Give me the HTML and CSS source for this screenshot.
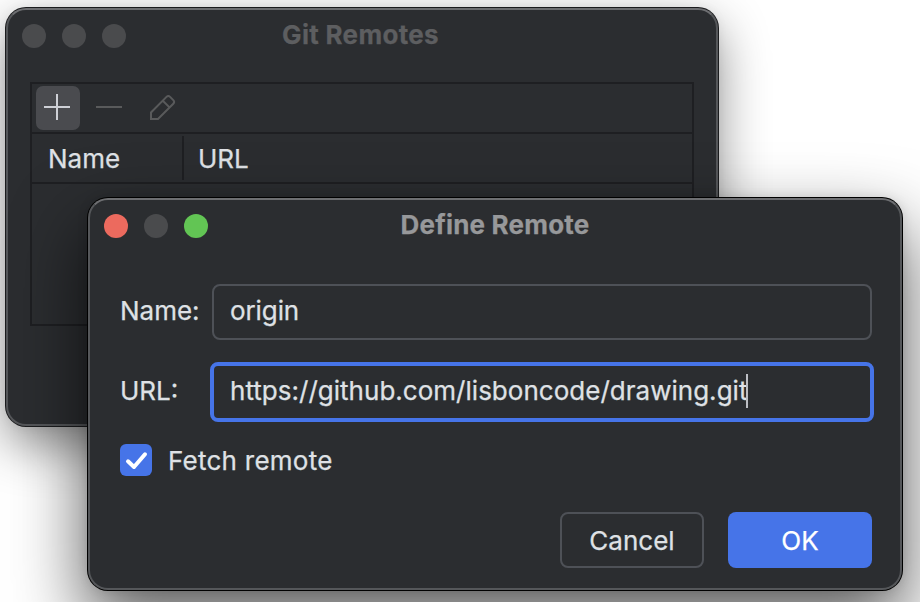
FILE: index.html
```html
<!DOCTYPE html>
<html lang="en">
<head>
<meta charset="utf-8">
<title>Git Remotes</title>
<link rel="stylesheet" href="styles.css">
</head>
<body>
<main class="desktop">
  <section class="window window-remotes">
    <header class="titlebar">
      <div class="lights"><i class="light"></i><i class="light"></i><i class="light"></i></div>
      <h1 class="title title-inactive">Git Remotes</h1>
    </header>
    <div class="table">
      <div class="toolbar">
        <button class="tool tool-active" aria-label="Add"><svg width="32" height="32" viewBox="0 0 32 32"><path d="M2 15h26M15 2v26" /></svg></button>
        <button class="tool" aria-label="Remove"><svg width="32" height="32" viewBox="0 0 32 32"><path d="M2 15h26" /></svg></button>
        <button class="tool" aria-label="Edit"><svg width="32" height="32" viewBox="0 0 32 32"><path d="M5 27V20.5L20.5 4.9Q22.3 3.1 24.1 4.9L27.3 8.1Q29.1 9.9 27.3 11.7L12 27ZM16.8 8.7L23.5 15.4" /></svg></button>
      </div>
      <div class="columns">
        <span class="col-name">Name</span>
        <span class="col-url">URL</span>
      </div>
    </div>
  </section>

  <section class="window window-define">
    <header class="titlebar">
      <div class="lights"><i class="light light-close"></i><i class="light"></i><i class="light light-zoom"></i></div>
      <h1 class="title">Define Remote</h1>
    </header>
    <div class="form">
      <div class="row"><span class="label">Name:</span><div class="field"><span class="value-name">origin</span></div></div>
      <div class="row"><span class="label">URL:</span><div class="field field-focus"><span class="value-url">https://github.com/lisboncode/drawing.git</span><i class="caret"></i></div></div>
      <div class="check">
        <span class="box"><svg width="32" height="32" viewBox="0 0 32 32"><path d="M8 17.3L14 23L25 10.3" /></svg></span>
        <span class="check-label">Fetch remote</span>
      </div>
    </div>
    <footer class="actions">
      <button class="button"><span class="cancel-label">Cancel</span></button>
      <button class="button button-primary"><span>OK</span></button>
    </footer>
  </section>
</main>
</body>
</html>
```
FILE: styles.css
```css
* { box-sizing: border-box; }
body { margin: 0; background: #fff; overflow: hidden; }
.desktop {
  position: relative;
  width: 920px;
  height: 602px;
  overflow: hidden;
  font: 26px/32px Inter, "Liberation Sans", sans-serif;
  color: #dfe1e5;
  -webkit-text-stroke: .25px currentColor;
}
button { font: inherit; color: inherit; border: 0; padding: 0; background: none; }
svg { display: block; fill: none; }
.window {
  position: absolute;
  background: #2b2d30;
  border: 2px solid #55575a;
  border-top-color: #6d6e71;
  border-radius: 20px;
}
.window-remotes {
  left: 6px; top: 8px; width: 712px; height: 418px;
  padding: 0 22px;
  box-shadow: 0 0 0 1px #1b1c1e, 0 18px 50px rgba(0, 0, 0, .46), 0 0 12px rgba(0, 0, 0, .06);
}
.window-define {
  left: 88px; top: 198px; width: 814px; height: 392px;
  padding: 0 28px 0 30px;
  box-shadow: 0 0 0 1px #000, 0 32px 70px 4px rgba(0, 0, 0, .62), 0 0 12px rgba(0, 0, 0, .12);
}
.titlebar { position: relative; height: 52px; display: flex; justify-content: center; }
.lights { position: absolute; left: -8px; top: 14px; display: flex; gap: 16px; }
.window-define .lights { left: -16px; }
.light { width: 24px; height: 24px; border-radius: 50%; background: #4a4b4d; }
.light-close { background: #ec6a5e; }
.light-zoom { background: #62c554; }
.title { margin: 9px 2px 0 0; font-size: 26px; line-height: 32px; font-weight: 700; letter-spacing: .2px; color: #97989a; white-space: nowrap; }
.title-inactive { margin-right: 3px; letter-spacing: .3px; color: #5d5e60; }

.table { margin-top: 20px; width: 664px; height: 244px; border: 2px solid #1e1f22; }
.toolbar { height: 50px; padding: 2px 4px; display: flex; gap: 8px; border-bottom: 2px solid #1e1f22; }
.tool { width: 44px; height: 44px; display: grid; place-items: center; border-radius: 7px; stroke: #595a5b; stroke-width: 2; }
.tool-active { background: #4a4b4f; stroke: #ced0d6; }
.columns { height: 50px; display: flex; align-items: center; border-bottom: 2px solid #1e1f22; }
.col-name { width: 152px; height: 44px; line-height: 46px; padding-left: 16px; border-right: 2px solid #1e1f22; }
.col-url { padding: 2px 0 0 14px; }

.form { margin-top: 32px; }
.row { display: flex; align-items: center; height: 56px; margin-bottom: 24px; }
.label { width: 92px; padding-bottom: 2px; white-space: nowrap; }
.field { flex: 1; height: 56px; display: flex; align-items: center; padding: 0 16px 2px; border: 2px solid #4e5157; border-radius: 8px; white-space: nowrap; }
.value-name { letter-spacing: -.1px; }
.value-url { letter-spacing: .02px; }
.field-focus { height: 60px; margin: -2px; padding: 0 16px 2px; border: 4px solid #4674e8; }
.caret { width: 2px; height: 34px; margin-left: -1px; background: #bcbec4; }
.check { display: flex; align-items: center; gap: 16px; }
.check-label { height: 32px; line-height: 34px; letter-spacing: .25px; }
.box { width: 32px; height: 32px; border-radius: 6px; background: #4674e8; stroke: #fff; stroke-width: 4; stroke-linecap: round; stroke-linejoin: round; }
.actions { display: flex; justify-content: flex-end; gap: 24px; margin-top: 36px; }
.button { width: 144px; height: 56px; padding-top: 2px; border: 2px solid #4e5157; border-radius: 8px; }
.button-primary { border: 0; background: #4674e8; color: #fff; }
```
